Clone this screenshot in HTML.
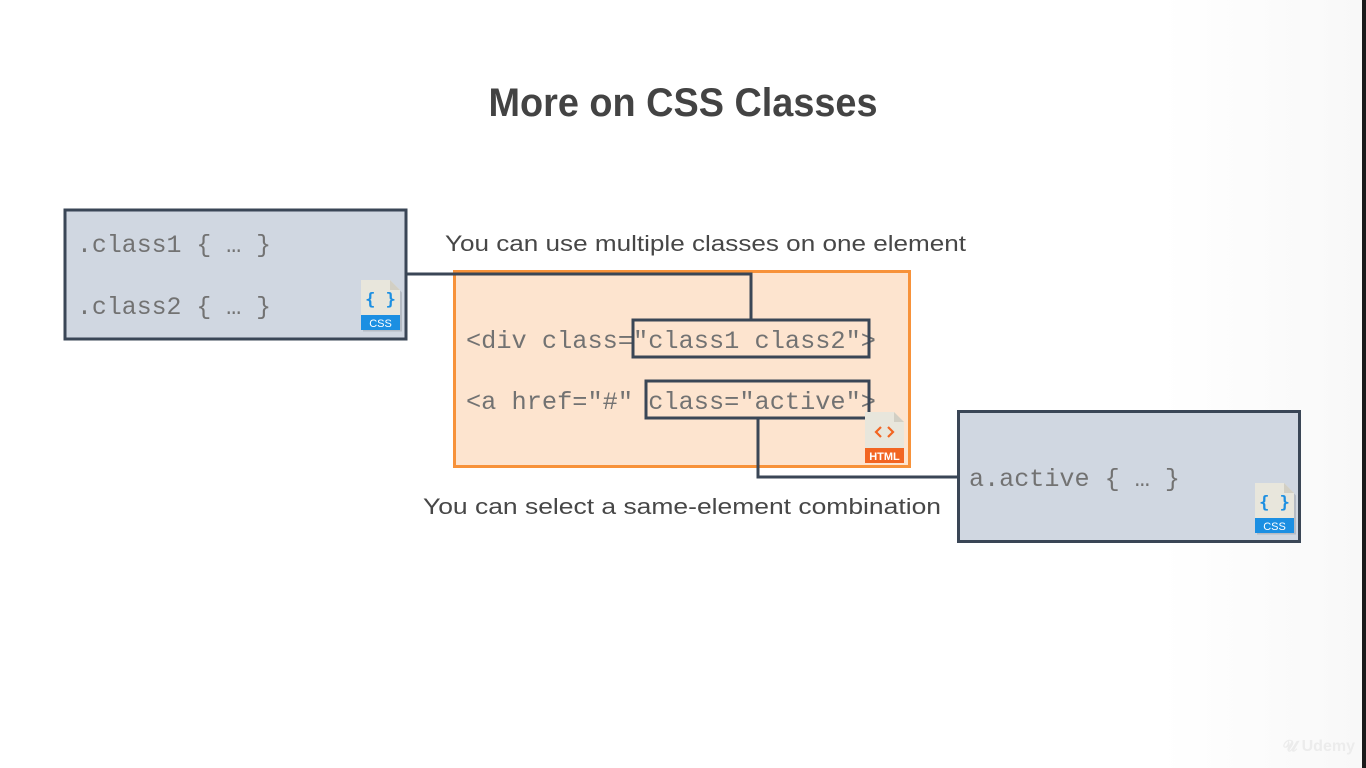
<!DOCTYPE html>
<html><head><meta charset="utf-8"><style>
html,body{margin:0;padding:0;background:#fefefe;}
svg{display:block}
</style></head><body>
<svg width="1366" height="768" viewBox="0 0 1366 768" xmlns="http://www.w3.org/2000/svg">
<defs>
<linearGradient id="bg" x1="0" x2="1"><stop offset="0.85" stop-color="#ffffff"/><stop offset="1" stop-color="#f8f8f8"/></linearGradient>
</defs>
<rect width="1366" height="768" fill="url(#bg)"/>
<rect x="1362" y="0" width="4" height="768" fill="#1a1a1a"/>
<text x="683" y="116" text-anchor="middle" font-family="Liberation Sans, sans-serif" font-weight="bold" font-size="40" fill="#434343" textLength="389" lengthAdjust="spacingAndGlyphs">More on CSS Classes</text>

<rect x="65" y="210" width="341" height="129" fill="#d0d7e1" stroke="#3a4656" stroke-width="3"/>
<g font-family="Liberation Mono, monospace" font-size="25" fill="#727272">
<text x="77" y="252" textLength="194" lengthAdjust="spacingAndGlyphs">.class1 { … }</text>
<text x="77" y="314" textLength="194" lengthAdjust="spacingAndGlyphs">.class2 { … }</text>
</g>

<rect x="454.5" y="271.5" width="455" height="195" fill="#fde4cf" stroke="#f7923a" stroke-width="3"/>

<polyline points="406,274 751,274 751,320" fill="none" stroke="#3a4656" stroke-width="3"/>
<polyline points="758,418 758,477 958,477" fill="none" stroke="#3a4656" stroke-width="3"/>

<g font-family="Liberation Mono, monospace" font-size="25" fill="#727272">
<text x="466" y="348" textLength="410" lengthAdjust="spacingAndGlyphs">&lt;div class="class1 class2"&gt;</text>
<text x="466" y="409" textLength="410" lengthAdjust="spacingAndGlyphs">&lt;a href="#" class="active"&gt;</text>
</g>
<rect x="633" y="320" width="236" height="37" fill="none" stroke="#3a4656" stroke-width="3"/>
<rect x="646" y="381" width="223" height="37" fill="none" stroke="#3a4656" stroke-width="3"/>

<rect x="958.5" y="411.5" width="341" height="130" fill="#d0d7e1" stroke="#3a4656" stroke-width="3"/>
<text x="969" y="486" font-family="Liberation Mono, monospace" font-size="25" fill="#727272" textLength="211" lengthAdjust="spacingAndGlyphs">a.active { … }</text>

<g font-family="Liberation Sans, sans-serif" font-size="22" fill="#474747">
<text x="445" y="251" textLength="521" lengthAdjust="spacingAndGlyphs">You can use multiple classes on one element</text>
<text x="423" y="514" textLength="518" lengthAdjust="spacingAndGlyphs">You can select a same-element combination</text>
</g>

<g transform="translate(361,280)">
<path d="M1 1 H30 L40 11 V50 H1 Z" fill="#9aa0a8" opacity="0.5" transform="translate(1,1.5)"/>
<path d="M0 0 H29 L39 10 V49 H0 Z" fill="#e8e6dc"/>
<path d="M29 0 V10 H39 Z" fill="#d2cfc4"/>
<rect x="0" y="35" width="39" height="15" fill="#1c8fe2"/>
<text x="19.5" y="25" text-anchor="middle" font-family="DejaVu Sans Mono, monospace" font-weight="bold" font-size="17" fill="#1c8fe2">{ }</text>
<text x="19.5" y="47" text-anchor="middle" font-family="Liberation Sans, sans-serif" font-size="11" fill="#fff">CSS</text>
</g>
<g transform="translate(1255,483)">
<path d="M1 1 H30 L40 11 V50 H1 Z" fill="#9aa0a8" opacity="0.5" transform="translate(1,1.5)"/>
<path d="M0 0 H29 L39 10 V49 H0 Z" fill="#e8e6dc"/>
<path d="M29 0 V10 H39 Z" fill="#d2cfc4"/>
<rect x="0" y="35" width="39" height="15" fill="#1c8fe2"/>
<text x="19.5" y="25" text-anchor="middle" font-family="DejaVu Sans Mono, monospace" font-weight="bold" font-size="17" fill="#1c8fe2">{ }</text>
<text x="19.5" y="47" text-anchor="middle" font-family="Liberation Sans, sans-serif" font-size="11" fill="#fff">CSS</text>
</g>
<g transform="translate(865,412)">
<path d="M0 0 H29 L39 10 V51 H0 Z" fill="#e8e6dc"/>
<path d="M29 0 V10 H39 Z" fill="#d2cfc4"/>
<rect x="0" y="36" width="39" height="15" fill="#f26522"/>
<path d="M16 15 L11 20 L16 25 M23 15 L28 20 L23 25" fill="none" stroke="#f26522" stroke-width="2.2"/>
<text x="19.5" y="48" text-anchor="middle" font-family="Liberation Sans, sans-serif" font-weight="bold" font-size="11" fill="#fff">HTML</text>
</g>

<text x="1283" y="751" font-family="Liberation Sans, sans-serif" font-weight="bold" font-size="16" fill="#ececec">𝓤 Udemy</text>
</svg>
</body></html>
